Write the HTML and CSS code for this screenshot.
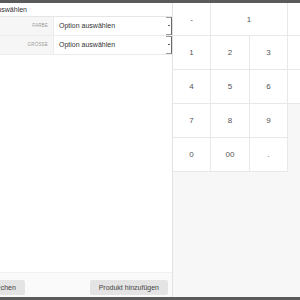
FILE: index.html
```html
<!DOCTYPE html>
<html lang="de">
<head>
    <meta charset="UTF-8">
    <title>Kasse</title>
    <link rel="stylesheet" href="styles.css">
</head>
<body>
<div class="topbar"></div>
<div class="main">
    <section class="order">
        <div class="order-head"><span class="head-text">Variante auswählen</span></div>
        <div class="variant">
            <div class="variant-label">Farbe</div>
            <div class="variant-value">Option auswählen</div>
            <div class="variant-arrow"><span></span></div>
        </div>
        <div class="variant">
            <div class="variant-label">Größe</div>
            <div class="variant-value">Option auswählen</div>
            <div class="variant-arrow"><span></span></div>
        </div>
        <div class="spacer"></div>
        <div class="actions">
            <button class="btn btn-cancel">Abbrechen</button>
            <button class="btn">Produkt hinzufügen</button>
        </div>
    </section>
    <section class="keypad-panel">
        <div class="keypad">
            <div class="key">-</div>
            <div class="key display">1</div>
            <div class="key"></div>
            <div class="key">1</div>
            <div class="key">2</div>
            <div class="key">3</div>
            <div class="key"></div>
            <div class="key">4</div>
            <div class="key">5</div>
            <div class="key">6</div>
            <div class="key"></div>
            <div class="key">7</div>
            <div class="key">8</div>
            <div class="key">9</div>
            <div class="key empty"></div>
            <div class="key">0</div>
            <div class="key">00</div>
            <div class="key">.</div>
        </div>
    </section>
</div>
<div class="bottombar"></div>
</body>
</html>
```

FILE: styles.css
```css
html, body { margin: 0; padding: 0; }
body { width: 300px; height: 300px; overflow: hidden; font-family: "Liberation Sans", Arial, sans-serif; color: #333; background: #fff; }
.topbar { height: 3px; background: #5b5b5b; }
.bottombar { height: 3px; background: #5b5b5b; }
.main { display: flex; height: 294px; }

.order { width: 172px; display: flex; flex-direction: column; background: #fff; }
.order-head { height: 13px; line-height: 13px; font-size: 7px; border-bottom: 1px solid #e6e6e6; overflow: hidden; white-space: nowrap; }
.head-text { display: inline-block; margin-left: -34px; }
.variant { display: flex; height: 18px; border-bottom: 1px solid #ececec; }
.variant-label { width: 53px; box-sizing: border-box; padding-right: 5px; background: #f6f6f6; text-align: right; text-transform: uppercase; font-size: 4.5px; line-height: 18px; color: #999; letter-spacing: 0.2px; }
.variant-value { flex: 1; padding-left: 5px; font-size: 7px; line-height: 18px; color: #333; border-left: 1px solid #ececec; }
.variant-arrow { width: 6px; position: relative; border-right: 1px solid #666; border-top: 1px solid #999; border-bottom: 1px solid #999; box-sizing: border-box; }
.variant-arrow span { position: absolute; right: 1px; top: 7px; width: 2px; height: 1px; background: #666; }
.spacer { flex: 1; }
.actions { display: flex; justify-content: space-between; align-items: center; padding: 7px 4px 2px 0; height: 15px; border-top: 1px solid #f0f0f0; background: #fafafa; }
.btn { height: 15px; padding: 0 9px; border: none; border-radius: 2px; background: #e4e4e4; color: #444; font-family: inherit; font-size: 7px; }
.btn-cancel { margin-left: -27px; }

.keypad-panel { flex: 1; background: #f7f7f7; border-left: 1px solid #e2e2e2; overflow: hidden; }
.keypad { display: grid; grid-template-columns: 38px 39px 38px 38px; grid-template-rows: 33px 34px 34px 34px 34px; }
.key { background: #fff; border-right: 1px solid #e8e8e8; border-bottom: 1px solid #e8e8e8; display: flex; align-items: center; justify-content: center; font-size: 8px; color: #555; }
.display { grid-column: span 2; }
.empty { background: transparent; border: none; }
```
